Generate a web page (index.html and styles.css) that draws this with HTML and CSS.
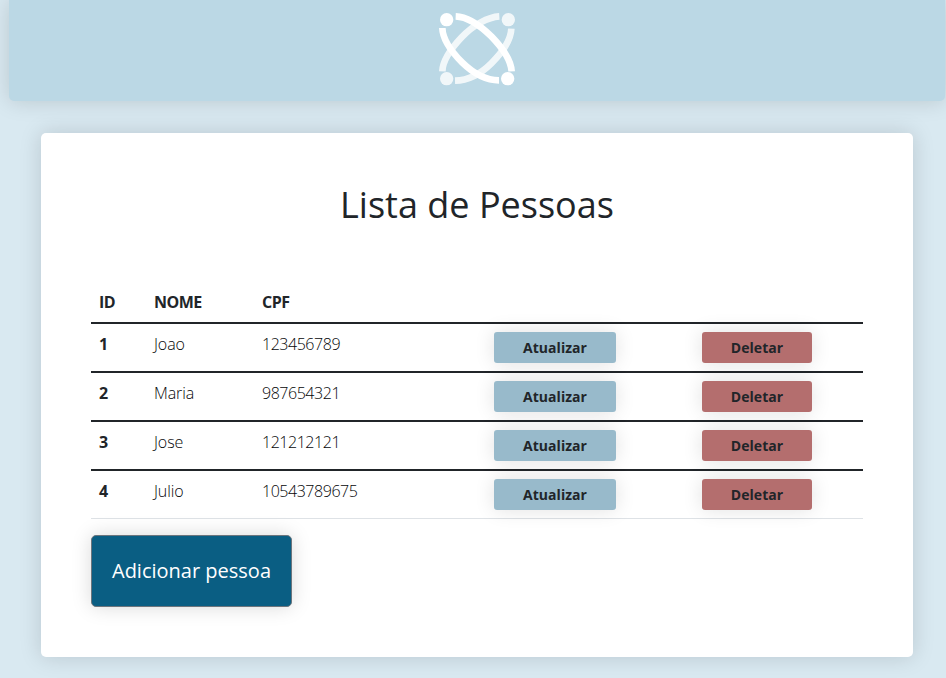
FILE: index.html
```html
<!DOCTYPE html>
<html lang="pt-BR">
<head>
<meta charset="utf-8">
<title>Lista de Pessoas</title>
<link rel="stylesheet" href="styles.css">
</head>
<body>
<header class="topbar">
  <svg class="logo" viewBox="0 0 300 300" fill="none" stroke="#fff" stroke-width="20">
    <g opacity=".8">
      <path d="M217 49C184 51 139 74 104 112C68 150 47 182 46 214"/>
      <path d="M253 86C252 119 229 154 193 190C158 225 122 241 84 242"/>
      <g fill="#fff" stroke="none"><circle cx="244" cy="59" r="20"/><circle cx="59" cy="236" r="20"/></g>
    </g>
    <path d="M86 49C118 50 155 72 193 109C228 145 252 182 254 214"/>
    <path d="M46 84C47 119 70 152 106 188C143 224 179 241 216 241"/>
    <g fill="#fff" stroke="none"><circle cx="59" cy="59" r="20"/><circle cx="242" cy="236" r="20"/></g>
  </svg>
</header>
<main class="card">
  <h1 class="title">Lista de Pessoas</h1>
  <table class="people">
    <colgroup><col class="c-id"><col class="c-name"><col class="c-cpf"><col class="c-update"><col class="c-delete"></colgroup>
    <thead><tr><th>ID</th><th>NOME</th><th>CPF</th><th></th><th></th></tr></thead>
    <tbody>
      <tr><th>1</th><td>Joao</td><td class="cpf">123456789</td><td><button class="btn update">Atualizar</button></td><td><button class="btn delete">Deletar</button></td></tr>
      <tr><th>2</th><td>Maria</td><td class="cpf">987654321</td><td><button class="btn update">Atualizar</button></td><td><button class="btn delete">Deletar</button></td></tr>
      <tr><th>3</th><td>Jose</td><td class="cpf">121212121</td><td><button class="btn update">Atualizar</button></td><td><button class="btn delete">Deletar</button></td></tr>
      <tr><th>4</th><td>Julio</td><td class="cpf">10543789675</td><td><button class="btn update">Atualizar</button></td><td><button class="btn delete">Deletar</button></td></tr>
    </tbody>
  </table>
  <button class="add">Adicionar pessoa</button>
</main>
</body>
</html>
```
FILE: styles.css
```css
* { box-sizing: border-box; }
body {
  margin: 0;
  height: 678px;
  overflow: hidden;
  background: #d9e9f1;
  color: #212529;
  font: 300 16px/24px "Open Sans", sans-serif;
}
.topbar {
  height: 101px;
  margin: 0 1px 0 9px;
  border-radius: 0 0 5px 5px;
  background: #bbd8e5;
  box-shadow: 0 0 22px rgba(0, 0, 0, .15);
}
.logo {
  display: block;
  width: 100px;
  height: 100px;
  margin-left: 418px;
}
.card {
  width: 872px;
  height: 524px;
  margin: 32px 0 0 41px;
  padding: 50px;
  border-radius: 5px;
  background: #fff;
  box-shadow: 0 0 22px rgba(0, 0, 20, .15);
}
.title {
  margin: 0 0 55px;
  text-align: center;
  font-size: 36px;
  font-weight: 400;
  line-height: 43px;
}
.people {
  width: 772px;
  table-layout: fixed;
  border-collapse: separate;
  border-spacing: 0;
}
.c-id { width: 55px; }
.c-name { width: 108px; }
.c-cpf { width: 232px; }
.c-update { width: 208px; }
.people th, .people td {
  height: 49px;
  padding: 8px;
  border-bottom: 2px solid #212529;
  text-align: left;
  vertical-align: top;
}
.people td { color: #050608; letter-spacing: -.1px; }
.people td.cpf { letter-spacing: -.46px; }
.people th { font-weight: 700; letter-spacing: -.5px; }
.people thead th { height: 43px; padding-top: 9px; }
.people tbody tr:last-child > * { height: 48px; border-bottom: 1px solid #dee2e6; }
.btn {
  display: block;
  height: 31px;
  padding: 0;
  border: 0;
  border-radius: 3px;
  color: #212529;
  font: 700 14px/21px "Open Sans", sans-serif;
  letter-spacing: .05px;
  box-shadow: 0 0 20px rgba(0, 0, 0, .12);
}
.update { width: 122px; background: #98bacb; }
.delete { width: 110px; background: #b46e6e; }
.add {
  display: block;
  width: 201px;
  height: 72px;
  margin-top: 16px;
  padding: 0;
  border: 1px solid #6c757d;
  border-radius: 5px;
  background: #0a5e83;
  color: #fff;
  font: 400 20px/30px "Open Sans", sans-serif;
  box-shadow: 0 0 20px rgba(0, 0, 0, .15);
}
```
